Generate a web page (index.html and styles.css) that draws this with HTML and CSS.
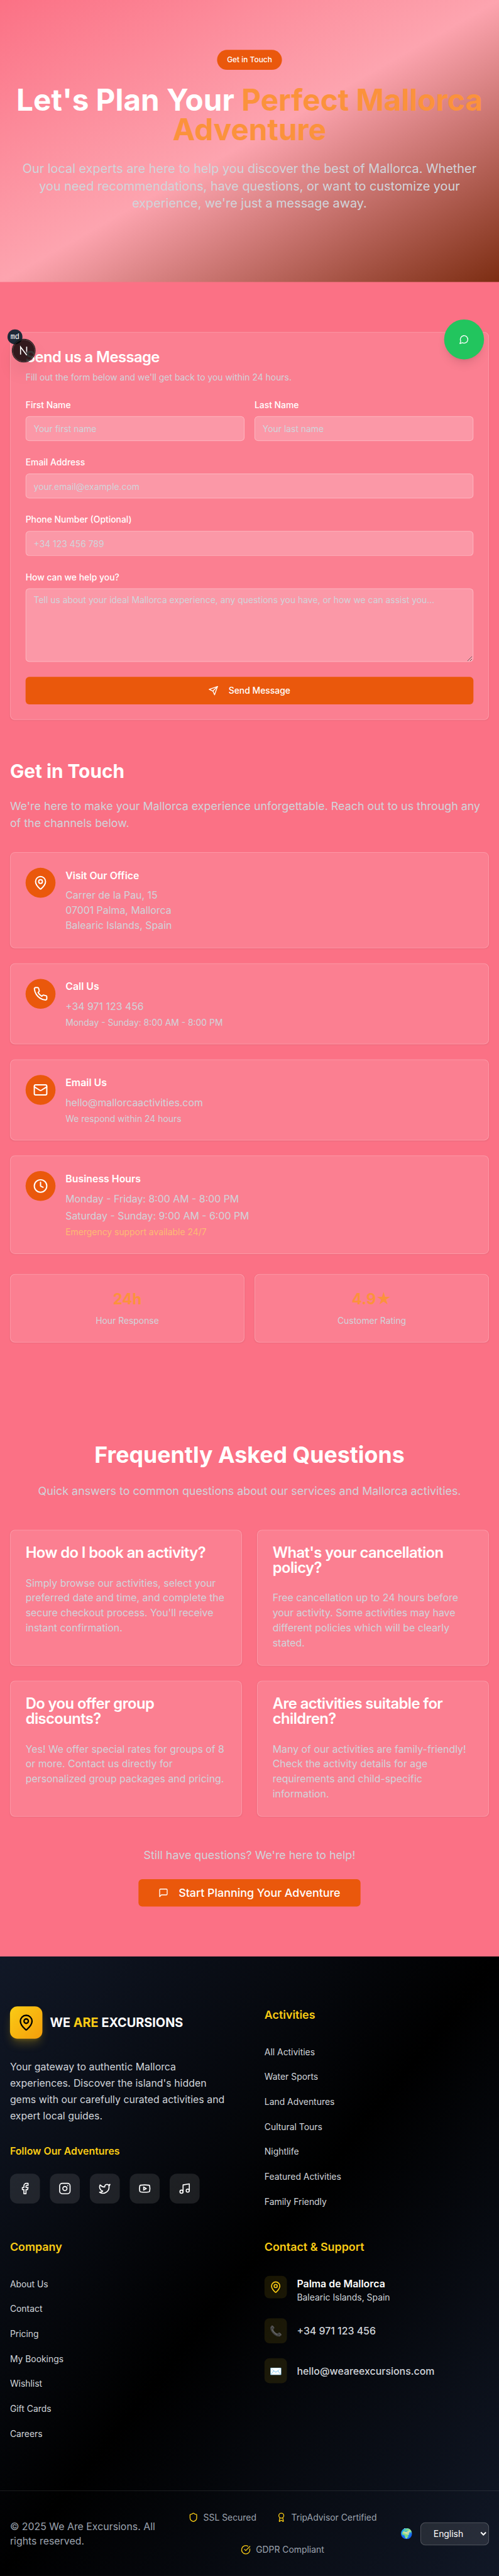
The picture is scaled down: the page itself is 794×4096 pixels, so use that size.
FILE: index.html
```html
<!DOCTYPE html>
<html lang="en">
<head>
<meta charset="utf-8">
<title>Contact - We Are Excursions</title>
<link rel="stylesheet" href="styles.css">
</head>
<body>
<svg class="sprite" aria-hidden="true">
  <symbol id="pin" viewBox="0 0 24 24"><path d="M20 10c0 4.993-5.539 10.193-7.399 11.799a1 1 0 0 1-1.202 0C9.539 20.193 4 14.993 4 10a8 8 0 0 1 16 0"/><circle cx="12" cy="10" r="3"/></symbol>
  <symbol id="phone" viewBox="0 0 24 24"><path d="M22 16.92v3a2 2 0 0 1-2.18 2 19.79 19.79 0 0 1-8.63-3.07 19.5 19.5 0 0 1-6-6 19.79 19.79 0 0 1-3.07-8.67A2 2 0 0 1 4.11 2h3a2 2 0 0 1 2 1.72 12.84 12.84 0 0 0 .7 2.81 2 2 0 0 1-.45 2.11L8.09 9.91a16 16 0 0 0 6 6l1.27-1.27a2 2 0 0 1 2.11-.45 12.84 12.84 0 0 0 2.81.7A2 2 0 0 1 22 16.92z"/></symbol>
  <symbol id="mail" viewBox="0 0 24 24"><rect width="20" height="16" x="2" y="4" rx="2"/><path d="m22 7-8.97 5.7a1.94 1.94 0 0 1-2.06 0L2 7"/></symbol>
  <symbol id="clock" viewBox="0 0 24 24"><circle cx="12" cy="12" r="10"/><path d="M12 6v6l4 2"/></symbol>
  <symbol id="send" viewBox="0 0 24 24"><path d="m22 2-7 20-4-9-9-4Z"/><path d="M22 2 11 13"/></symbol>
  <symbol id="square-msg" viewBox="0 0 24 24"><path d="M21 15a2 2 0 0 1-2 2H7l-4 4V5a2 2 0 0 1 2-2h14a2 2 0 0 1 2 2z"/></symbol>
  <symbol id="round-msg" viewBox="0 0 24 24"><path d="M7.9 20A9 9 0 1 0 4 16.1L2 22Z"/></symbol>
  <symbol id="facebook" viewBox="0 0 24 24"><path d="M18 2h-3a5 5 0 0 0-5 5v3H7v4h3v8h4v-8h3l1-4h-4V7a1 1 0 0 1 1-1h3z"/></symbol>
  <symbol id="instagram" viewBox="0 0 24 24"><rect width="20" height="20" x="2" y="2" rx="5"/><path d="M16 11.37A4 4 0 1 1 12.63 8 4 4 0 0 1 16 11.37z"/><path d="M17.5 6.5h.01"/></symbol>
  <symbol id="twitter" viewBox="0 0 24 24"><path d="M22 4s-.7 2.1-2 3.4c1.6 10-9.4 17.3-18 11.6 2.2.1 4.4-.6 6-2C3 15.5.5 9.6 3 5c2.2 2.6 5.6 4.1 9 4-.9-4.2 4-6.6 7-3.8 1.1 0 3-1.2 3-1.2z"/></symbol>
  <symbol id="youtube" viewBox="0 0 24 24"><path d="M2.5 17a24.12 24.12 0 0 1 0-10 2 2 0 0 1 1.4-1.4 49.56 49.56 0 0 1 16.2 0A2 2 0 0 1 21.5 7a24.12 24.12 0 0 1 0 10 2 2 0 0 1-1.4 1.4 49.55 49.55 0 0 1-16.2 0A2 2 0 0 1 2.5 17"/><path d="m10 15 5-3-5-3z"/></symbol>
  <symbol id="music" viewBox="0 0 24 24"><path d="M9 18V5l12-2v13"/><circle cx="6" cy="18" r="3"/><circle cx="18" cy="16" r="3"/></symbol>
  <symbol id="shield" viewBox="0 0 24 24"><path d="M20 13c0 5-3.5 7.5-7.66 8.95a1 1 0 0 1-.67-.01C7.5 20.5 4 18 4 13V6a1 1 0 0 1 1-1c2 0 4.5-1.2 6.24-2.72a1.17 1.17 0 0 1 1.52 0C14.51 3.81 17 5 19 5a1 1 0 0 1 1 1z"/></symbol>
  <symbol id="award" viewBox="0 0 24 24"><path d="m15.477 12.89 1.515 8.526a.5.5 0 0 1-.81.47l-3.58-2.687a1 1 0 0 0-1.197 0l-3.586 2.686a.5.5 0 0 1-.81-.469l1.514-8.526"/><circle cx="12" cy="8" r="6"/></symbol>
  <symbol id="check" viewBox="0 0 24 24"><path d="M21.801 10A10 10 0 1 1 17 3.335"/><path d="m9 11 3 3L22 4"/></symbol>
</svg>

<section class="hero">
  <span class="pill">Get in Touch</span>
  <h1>Let's Plan Your <span>Perfect Mallorca Adventure</span></h1>
  <p>Our local experts are here to help you discover the best of Mallorca. Whether you need recommendations, have questions, or want to customize your experience, we're just a message away.</p>
</section>

<section class="contact">
  <form class="card message">
    <h2>Send us a Message</h2>
    <p class="hint">Fill out the form below and we'll get back to you within 24 hours.</p>
    <div class="fields">
      <div class="pair">
        <label>First Name<input type="text" placeholder="Your first name"></label>
        <label>Last Name<input type="text" placeholder="Your last name"></label>
      </div>
      <label>Email Address<input type="email" placeholder="your.email@example.com"></label>
      <label>Phone Number (Optional)<input type="tel" placeholder="+34 123 456 789"></label>
      <label>How can we help you?<textarea placeholder="Tell us about your ideal Mallorca experience, any questions you have, or how we can assist you..."></textarea></label>
      <button class="btn" type="button"><svg class="icon s16"><use href="#send"/></svg>Send Message</button>
    </div>
  </form>

  <div class="touch">
    <h2>Get in Touch</h2>
    <p class="lead">We're here to make your Mallorca experience unforgettable. Reach out to us through any of the channels below.</p>
    <div class="channels">
      <article class="card channel">
        <span class="disc"><svg class="icon s24"><use href="#pin"/></svg></span>
        <div><h3>Visit Our Office</h3><p>Carrer de la Pau, 15<br>07001 Palma, Mallorca<br>Balearic Islands, Spain</p></div>
      </article>
      <article class="card channel">
        <span class="disc"><svg class="icon s24"><use href="#phone"/></svg></span>
        <div><h3>Call Us</h3><p>+34 971 123 456</p><p class="small">Monday - Sunday: 8:00 AM - 8:00 PM</p></div>
      </article>
      <article class="card channel">
        <span class="disc"><svg class="icon s24"><use href="#mail"/></svg></span>
        <div><h3>Email Us</h3><p>hello@mallorcaactivities.com</p><p class="small">We respond within 24 hours</p></div>
      </article>
      <article class="card channel">
        <span class="disc"><svg class="icon s24"><use href="#clock"/></svg></span>
        <div><h3>Business Hours</h3><p>Monday - Friday: 8:00 AM - 8:00 PM</p><p>Saturday - Sunday: 9:00 AM - 6:00 PM</p><p class="small warm">Emergency support available 24/7</p></div>
      </article>
    </div>
    <div class="stats">
      <div class="card stat"><strong>24h</strong><span>Hour Response</span></div>
      <div class="card stat"><strong>4.9★</strong><span>Customer Rating</span></div>
    </div>
  </div>
</section>

<section class="faq">
  <h2>Frequently Asked Questions</h2>
  <p class="lead">Quick answers to common questions about our services and Mallorca activities.</p>
  <div class="questions">
    <article class="card"><h3>How do I book an activity?</h3><p>Simply browse our activities, select your preferred date and time, and complete the secure checkout process. You'll receive instant confirmation.</p></article>
    <article class="card"><h3>What's your cancellation policy?</h3><p>Free cancellation up to 24 hours before your activity. Some activities may have different policies which will be clearly stated.</p></article>
    <article class="card"><h3>Do you offer group discounts?</h3><p>Yes! We offer special rates for groups of 8 or more. Contact us directly for personalized group packages and pricing.</p></article>
    <article class="card"><h3>Are activities suitable for children?</h3><p>Many of our activities are family-friendly! Check the activity details for age requirements and child-specific information.</p></article>
  </div>
  <p class="lead still">Still have questions? We're here to help!</p>
  <button class="btn large" type="button"><svg class="icon s16"><use href="#square-msg"/></svg>Start Planning Your Adventure</button>
</section>

<footer class="footer">
  <div class="columns">
    <div>
      <div class="brand"><span class="mark"><svg class="icon s28"><use href="#pin"/></svg></span><span class="name">WE <em>ARE</em> EXCURSIONS</span></div>
      <p class="about">Your gateway to authentic Mallorca experiences. Discover the island's hidden gems with our carefully curated activities and expert local guides.</p>
      <h4 class="follow">Follow Our Adventures</h4>
      <div class="social">
        <a><svg class="icon s20"><use href="#facebook"/></svg></a>
        <a><svg class="icon s20"><use href="#instagram"/></svg></a>
        <a><svg class="icon s20"><use href="#twitter"/></svg></a>
        <a><svg class="icon s20"><use href="#youtube"/></svg></a>
        <a><svg class="icon s20"><use href="#music"/></svg></a>
      </div>
    </div>
    <div>
      <h3>Activities</h3>
      <ul><li><a>All Activities</a></li><li><a>Water Sports</a></li><li><a>Land Adventures</a></li><li><a>Cultural Tours</a></li><li><a>Nightlife</a></li><li><a>Featured Activities</a></li><li><a>Family Friendly</a></li></ul>
    </div>
    <div>
      <h3>Company</h3>
      <ul><li><a>About Us</a></li><li><a>Contact</a></li><li><a>Pricing</a></li><li><a>My Bookings</a></li><li><a>Wishlist</a></li><li><a>Gift Cards</a></li><li><a>Careers</a></li></ul>
    </div>
    <div>
      <h3>Contact &amp; Support</h3>
      <div class="support">
        <div class="row top"><span class="chip"><svg class="icon s20"><use href="#pin"/></svg></span><div><b>Palma de Mallorca</b><small>Balearic Islands, Spain</small></div></div>
        <div class="row"><span class="chip">📞</span><span>+34 971 123 456</span></div>
        <div class="row"><span class="chip">✉️</span><span>hello@weareexcursions.com</span></div>
      </div>
    </div>
  </div>
  <div class="legal">
    <p>© 2025 We Are Excursions. All rights reserved.</p>
    <div class="trust">
      <span><svg class="icon s16"><use href="#shield"/></svg>SSL Secured</span>
      <span><svg class="icon s16"><use href="#award"/></svg>TripAdvisor Certified</span>
      <span><svg class="icon s16"><use href="#check"/></svg>GDPR Compliant</span>
    </div>
    <div class="lang"><span>🌍</span><select><option>English</option></select></div>
  </div>
</footer>

<a class="chat"><svg class="icon s16"><use href="#round-msg"/></svg></a>
<span class="breakpoint">md</span>
<span class="devtools"><svg viewBox="0 0 40 40" width="36" height="36" fill="none"><defs><linearGradient id="fade" x1="0" y1="13" x2="0" y2="25" gradientUnits="userSpaceOnUse"><stop stop-color="#fff"/><stop offset=".6" stop-color="#fff"/><stop offset="1" stop-color="#fff" stop-opacity="0"/></linearGradient></defs><path d="M14.4 27V13.5L25.5 28" stroke="#fff" stroke-width="1.8"/><path d="M25.3 13v12" stroke="url(#fade)" stroke-width="1.8"/></svg></span>
</body>
</html>
```
FILE: styles.css
```css
*, *::before, *::after { box-sizing: border-box; margin: 0; padding: 0; }
html { height: 4096px; background: #fb7185; overflow: hidden; }
body {
  position: relative;
  width: 800px;
  transform: scale(.9925, .992);
  transform-origin: 0 0;
  font: 400 16px/24px Inter, sans-serif;
  color: #fff;
  background: #fb7185;
}
.sprite { position: absolute; width: 0; height: 0; }
.icon { display: block; flex: none; fill: none; stroke: currentColor; stroke-width: 2; stroke-linecap: round; stroke-linejoin: round; }
.s16 { width: 16px; height: 16px; }
.s20 { width: 20px; height: 20px; }
.s24 { width: 24px; height: 24px; }
.s28 { width: 28px; height: 28px; }

.hero {
  display: flex; flex-direction: column; align-items: center;
  height: 452px; padding: 80px 16px 0; text-align: center;
  background: linear-gradient(to bottom right, #fb7185, #fda4af, #7c2d12);
}
.pill { height: 32px; padding: 0 16px; border-radius: 16px; background: #ea580c; font-size: 12px; font-weight: 500; line-height: 32px; }
.hero h1 { margin-top: 24px; font-size: 48px; line-height: 48px; font-weight: 700; }
.hero h1 span { color: #fb923c; }
.hero p { max-width: 740px; margin-top: 24px; font-size: 20px; line-height: 28px; color: #d1d5db; }

.card { border: 1px solid rgba(255,255,255,.2); border-radius: 8px; background: rgba(255,255,255,.1); box-shadow: 0 1px 2px rgba(0,0,0,.05); }
.contact { display: flex; flex-direction: column; gap: 64px; padding: 80px 16px; }
.message { padding: 24px; }
.message h2 { font-size: 24px; line-height: 32px; font-weight: 600; letter-spacing: -.6px; }
.hint { margin-top: 6px; font-size: 14px; line-height: 20px; color: #d1d5db; }
.fields { display: flex; flex-direction: column; gap: 24px; margin-top: 24px; }
.pair { display: grid; grid-template-columns: 1fr 1fr; gap: 16px; }
label { display: flex; flex-direction: column; gap: 8px; font-size: 14px; line-height: 20px; font-weight: 500; }
input, textarea {
  width: 100%; height: 40px; padding: 8px 12px;
  border: 1px solid rgba(255,255,255,.3); border-radius: 6px; background: rgba(255,255,255,.2);
  font: 400 14px/20px Inter, sans-serif; color: #fff; outline: none;
}
textarea { display: block; height: 118px; resize: vertical; }
::placeholder { color: #d1d5db; opacity: 1; }
.btn {
  display: flex; align-items: center; justify-content: center; gap: 16px;
  height: 44px; padding: 0 32px; border: 0; border-radius: 6px;
  background: #ea580c; color: #fff; font: 500 14px/20px Inter, sans-serif;
}
.btn.large { font-size: 18px; line-height: 28px; }
.touch h2 { font-size: 30px; line-height: 36px; font-weight: 700; }
.lead { margin-top: 24px; font-size: 18px; line-height: 28px; color: #d1d5db; }
.channels { display: flex; flex-direction: column; gap: 24px; margin-top: 32px; }
.channel { display: flex; align-items: flex-start; gap: 16px; padding: 24px; }
.disc { display: flex; align-items: center; justify-content: center; width: 48px; height: 48px; border-radius: 50%; background: #ea580c; }
.channel h3 { margin-bottom: 8px; font-size: 16px; line-height: 24px; font-weight: 600; }
.channel p { color: #d1d5db; }
.channel p + p { margin-top: 4px; }
.channel .small { font-size: 14px; line-height: 20px; }
.channel .warm { color: #fdba74; }
.stats { display: grid; grid-template-columns: 1fr 1fr; gap: 16px; margin-top: 32px; }
.stat { display: flex; flex-direction: column; align-items: center; gap: 8px; padding: 24px; }
.stat strong { font-size: 24px; line-height: 32px; font-weight: 700; color: #fb923c; }
.stat span { font-size: 14px; line-height: 20px; color: #d1d5db; }

.faq { display: flex; flex-direction: column; align-items: center; padding: 80px 16px; }
.faq h2 { font-size: 36px; line-height: 40px; font-weight: 700; }
.questions { display: grid; grid-template-columns: 1fr 1fr; gap: 24px; width: 100%; margin-top: 48px; }
.questions .card { padding: 24px; }
.questions h3 { font-size: 24px; line-height: 24px; font-weight: 600; letter-spacing: -.6px; }
.questions p { margin-top: 24px; color: #d1d5db; }
.still { margin: 48px 0 24px; }

.footer { background: linear-gradient(to bottom right, #111827, #000, #111827); }
.columns { display: grid; grid-template-columns: 1fr 1fr; gap: 48px; padding: 80px 16px; }
.brand { display: flex; align-items: center; gap: 12px; }
.mark { display: flex; align-items: center; justify-content: center; width: 52px; height: 52px; border-radius: 12px; color: #000; background: linear-gradient(to bottom right, #facc15, #f59e0b); box-shadow: 0 10px 15px -3px rgba(250,204,21,.25), 0 4px 6px -4px rgba(250,204,21,.25); }
.name { font-size: 20px; line-height: 28px; font-weight: 700; }
.name em { font-style: normal; color: #facc15; }
.about { margin-top: 32px; line-height: 26px; color: #d1d5db; }
.follow { margin-top: 32px; font-size: 16px; line-height: 24px; font-weight: 600; color: #facc15; }
.social { display: flex; gap: 16px; margin-top: 24px; }
.social a { display: flex; align-items: center; justify-content: center; width: 48px; height: 48px; border-radius: 12px; background: rgba(255,255,255,.1); }
.columns h3 { font-size: 18px; line-height: 28px; font-weight: 600; color: #facc15; }
.columns ul { display: flex; flex-direction: column; gap: 16px; margin-top: 32px; list-style: none; }
.columns li { height: 24px; }
.columns li a { font-size: 14px; color: #d1d5db; }
.support { display: flex; flex-direction: column; gap: 24px; margin-top: 32px; }
.row { display: flex; align-items: center; gap: 16px; color: #d1d5db; font-weight: 500; }
.row.top { align-items: flex-start; }
.row b, .row small { display: block; }
.row b { font-weight: 600; color: #fff; }
.row small { font-size: 14px; line-height: 20px; font-weight: 400; }
.chip { width: 36px; padding: 8px; border-radius: 8px; background: rgba(250,204,21,.1); color: #facc15; font-weight: 400; }
.legal { display: grid; grid-template-columns: 249px 328px auto; gap: 24px; align-items: center; padding: 32px 16px; border-top: 1px solid rgba(255,255,255,.1); color: #9ca3af; }
.trust { display: flex; flex-wrap: wrap; justify-content: center; gap: 32px; font-size: 14px; line-height: 20px; }
.trust span { display: flex; align-items: center; gap: 8px; }
.trust svg { color: #facc15; }
.lang { display: flex; align-items: center; justify-content: flex-end; gap: 12px; }
.lang select { width: 110px; height: 37px; padding: 8px 16px; border: 1px solid rgba(255,255,255,.2); border-radius: 8px; background-color: rgba(255,255,255,.1); color: #fff; font: 400 14px/20px Inter, sans-serif; }

.chat { position: absolute; top: 512px; left: 712px; display: flex; align-items: center; justify-content: center; width: 64px; height: 64px; border-radius: 50%; background: #22c55e; box-shadow: 0 10px 15px -3px rgba(0,0,0,.1), 0 4px 6px -4px rgba(0,0,0,.1); }
.breakpoint { position: absolute; top: 528px; left: 12px; width: 24px; height: 24px; border-radius: 50%; background: #1f2937; font: 400 12px/24px "Liberation Mono", monospace; text-align: center; }
.devtools { position: absolute; top: 544px; left: 20px; width: 36px; height: 36px; border-radius: 50%; background: rgba(0,0,0,.8); box-shadow: 0 0 0 1px #171717, inset 0 0 0 1px rgba(255,255,255,.14), 0 16px 32px -8px rgba(0,0,0,.24); }
.devtools svg { display: block; }
```
